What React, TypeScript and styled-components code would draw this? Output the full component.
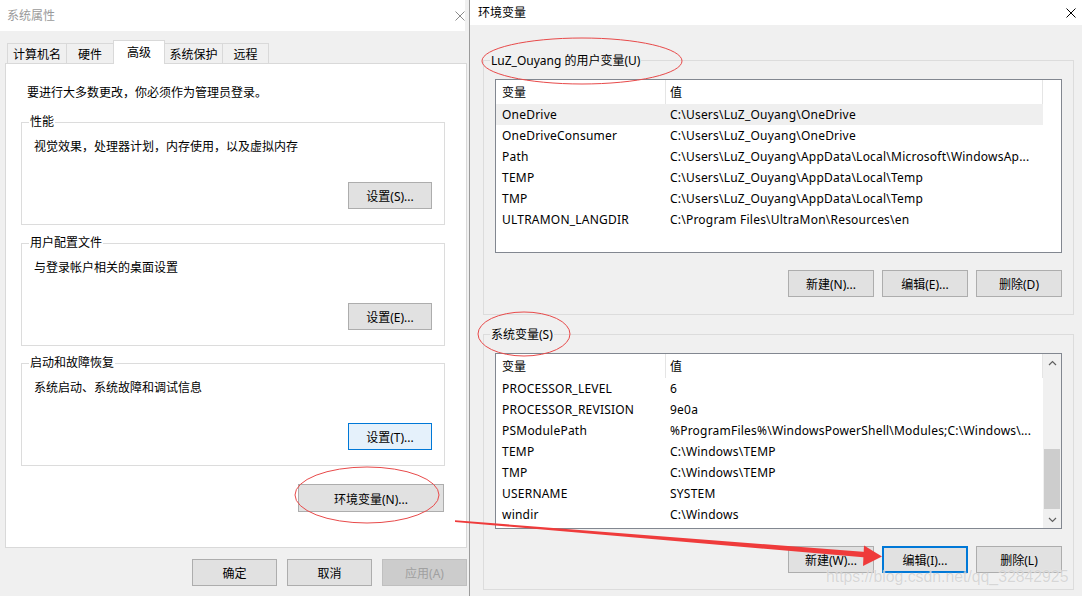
import React from 'react';
import styled, { createGlobalStyle } from 'styled-components';

const GlobalStyle = createGlobalStyle`
  html, body { margin: 0; padding: 0; background: #fff; }
  body {
    font-family: 'Noto Sans', 'Noto Sans CJK SC', sans-serif;
    font-size: 12px;
    color: #000;
  }
  * { box-sizing: border-box; }
`;

const Page = styled.div`
  position: relative;
  width: 1082px;
  height: 596px;
  display: flex;
  overflow: hidden;
`;

/* ---------- window chrome ---------- */

const LeftWindow = styled.div`
  width: 469px;
  display: flex;
  flex-direction: column;
  background: #f0f0f0;
`;

const RightWindow = styled.div`
  flex: 1;
  display: flex;
  flex-direction: column;
  background: #f0f0f0;
  border-left: 1px solid #9b9b9b;
`;

const TitleBar = styled.div<{ $h: number; $inactive?: boolean; $padL: number; $padR: number; $trim?: number }>`
  height: ${(p) => p.$h}px;
  background: #fff;
  display: flex;
  align-items: center;
  justify-content: space-between;
  padding: 0 ${(p) => p.$padR}px 0 ${(p) => p.$padL}px;
  margin-right: ${(p) => p.$trim || 0}px;
  color: ${(p) => (p.$inactive ? '#9a9a9a' : '#000')};
  line-height: 16px;
`;

const CloseIcon = ({ color }: { color: string }) => (
  <svg width="10" height="10" viewBox="0 0 10 10">
    <path d="M0.5 0.5 L9.5 9.5 M9.5 0.5 L0.5 9.5" stroke={color} strokeWidth="1" fill="none" />
  </svg>
);

/* ---------- buttons ---------- */

const Btn = styled.div<{ $w: number; $h?: number; $variant?: 'hover' | 'focus' | 'disabled' }>`
  width: ${(p) => p.$w}px;
  height: ${(p) => p.$h || 27}px;
  display: flex;
  align-items: center;
  justify-content: center;
  flex-shrink: 0;
  padding-top: 1px;
  background: ${(p) =>
    p.$variant === 'hover' ? '#e5f1fb' : p.$variant === 'disabled' ? '#cccccc' : '#e1e1e1'};
  border: ${(p) =>
    p.$variant === 'focus'
      ? '2px solid #0078d7'
      : p.$variant === 'hover'
      ? '1px solid #0078d7'
      : p.$variant === 'disabled'
      ? '1px solid #bfbfbf'
      : '1px solid #adadad'};
  color: ${(p) => (p.$variant === 'disabled' ? '#a0a0a0' : '#000')};
  white-space: nowrap;
`;

/* ---------- left dialog ---------- */

const LeftBody = styled.div`
  flex: 1;
  padding: 9px 2px 0 5px;
  display: flex;
  flex-direction: column;
`;

const TabStrip = styled.div`
  height: 23px;
  display: flex;
  align-items: flex-end;
  padding-left: 2px;
`;

const Tab = styled.div<{ $w: number; $active?: boolean }>`
  width: ${(p) => p.$w}px;
  height: ${(p) => (p.$active ? 24 : 20)}px;
  margin-left: -1px;
  margin-bottom: ${(p) => (p.$active ? -1 : 0)}px;
  position: relative;
  z-index: ${(p) => (p.$active ? 1 : 0)};
  display: flex;
  align-items: center;
  justify-content: center;
  padding-bottom: ${(p) => (p.$active ? 2 : 0)}px;
  background: ${(p) => (p.$active ? '#fff' : '#f0f0f0')};
  border: 1px solid #d9d9d9;
  border-bottom: none;
  &:first-child { margin-left: 0; }
`;

const TabPanel = styled.div`
  height: 485px;
  background: #fff;
  border: 1px solid #d9d9d9;
  padding: 21px 0 0 15px;
  display: flex;
  flex-direction: column;
`;

const Notice = styled.div`
  line-height: 16px;
  padding-left: 6px;
`;

const Group = styled.div<{ $top: number }>`
  width: 424px;
  height: 103px;
  margin-top: ${(p) => p.$top}px;
  border: 1px solid #dcdcdc;
  display: flex;
  flex-direction: column;
`;

const Legend = styled.div<{ $bg: string; $left: number }>`
  align-self: flex-start;
  margin: -9px 0 0 ${(p) => p.$left}px;
  padding: 0 1px;
  line-height: 16px;
  background: ${(p) => p.$bg};
`;

const GroupText = styled.div`
  margin-top: 9px;
  padding-left: 12px;
  line-height: 16px;
`;

const GroupAction = styled.div`
  margin: auto 12px 15px 0;
  align-self: flex-end;
`;

const EnvAction = styled.div`
  margin: 18px 22px 0 0;
  align-self: flex-end;
`;

const Footer = styled.div`
  margin-top: 11px;
  display: flex;
  justify-content: flex-end;
  gap: 10px;
`;

/* ---------- right dialog ---------- */

const RightBody = styled.div`
  flex: 1;
  padding: 35px 8px 0 13px;
  display: flex;
  flex-direction: column;
`;

const VarGroup = styled.div<{ $h: number; $top: number }>`
  height: ${(p) => p.$h}px;
  margin-top: ${(p) => p.$top}px;
  border: 1px solid #dcdcdc;
  display: flex;
  flex-direction: column;
`;

const VarLegend = styled(Legend)`
  margin-top: -8px;
`;

const ListBox = styled.div<{ $h: number }>`
  width: 567px;
  height: ${(p) => p.$h}px;
  margin: 10px 0 0 11px;
  border: 1px solid #828790;
  background: #fff;
  display: flex;
  overflow: hidden;
`;

const ListMain = styled.div`
  width: 547px;
  display: flex;
  flex-direction: column;
`;

const HeaderRow = styled.div`
  height: 24px;
  display: flex;
  border-right: 1px solid #e5e5e5;
`;

const HeaderCell = styled.div<{ $w?: number }>`
  ${(p) => (p.$w ? `width: ${p.$w}px; border-right: 1px solid #e5e5e5; padding-left: 6px;` : 'flex: 1; padding-left: 4px;')}
  line-height: 24px;
  padding-top: 1px;
`;

const Row = styled.div<{ $selected?: boolean }>`
  height: 21px;
  display: flex;
  align-items: center;
  letter-spacing: 0.22px;
  background: ${(p) => (p.$selected ? '#efefef' : 'transparent')};
`;

const NameCell = styled.div`
  width: 170px;
  padding-left: 6px;
  white-space: nowrap;
  overflow: hidden;
`;

const ValueCell = styled.div`
  flex: 1;
  padding-left: 4px;
  white-space: nowrap;
  overflow: hidden;
`;

const Scrollbar = styled.div`
  width: 18px;
  background: #f0f0f0;
  display: flex;
  flex-direction: column;
  margin-left: auto;
`;

const ScrollArrow = styled.div`
  height: 17px;
  display: flex;
  align-items: center;
  justify-content: center;
`;

const Track = styled.div`
  flex: 1;
  padding: 0 1px;
`;

const Thumb = styled.div`
  margin-top: 78px;
  height: 60px;
  background: #cdcdcd;
`;

const ButtonRow = styled.div<{ $top: number }>`
  margin-top: ${(p) => p.$top}px;
  display: flex;
  justify-content: flex-end;
  gap: 8px;
  padding-right: 11px;
`;

/* ---------- overlay marks ---------- */

const Marks = styled.svg`
  position: absolute;
  left: 0;
  top: 0;
  pointer-events: none;
`;

const Watermark = styled.div`
  position: absolute;
  left: 826px;
  top: 568px;
  font-family: 'Liberation Sans', Arial, sans-serif;
  font-size: 15.8px;
  color: rgba(190, 190, 190, 0.6);
  text-shadow: 0 0 1px rgba(255, 255, 255, 0.9);
  pointer-events: none;
  white-space: nowrap;
`;

const Chevron = ({ up }: { up?: boolean }) => (
  <svg width="9" height="6" viewBox="0 0 9 6">
    <path d={up ? 'M1 5 L4.5 1.5 L8 5' : 'M1 1 L4.5 4.5 L8 1'} stroke="#606060" strokeWidth="1.2" fill="none" />
  </svg>
);

const tabs = [
  { label: '计算机名', w: 60 },
  { label: '硬件', w: 48 },
  { label: '高级', w: 52, active: true },
  { label: '系统保护', w: 59 },
  { label: '远程', w: 47 },
];

const groups = [
  { title: '性能', text: '视觉效果，处理器计划，内存使用，以及虚拟内存', btn: '设置(S)...', top: 21 },
  { title: '用户配置文件', text: '与登录帐户相关的桌面设置', btn: '设置(E)...', top: 18 },
  { title: '启动和故障恢复', text: '系统启动、系统故障和调试信息', btn: '设置(T)...', top: 17, hover: true },
];

const userVars = [
  ['OneDrive', 'C:\\Users\\LuZ_Ouyang\\OneDrive'],
  ['OneDriveConsumer', 'C:\\Users\\LuZ_Ouyang\\OneDrive'],
  ['Path', 'C:\\Users\\LuZ_Ouyang\\AppData\\Local\\Microsoft\\WindowsAp...'],
  ['TEMP', 'C:\\Users\\LuZ_Ouyang\\AppData\\Local\\Temp'],
  ['TMP', 'C:\\Users\\LuZ_Ouyang\\AppData\\Local\\Temp'],
  ['ULTRAMON_LANGDIR', 'C:\\Program Files\\UltraMon\\Resources\\en'],
];

const sysVars = [
  ['PROCESSOR_LEVEL', '6'],
  ['PROCESSOR_REVISION', '9e0a'],
  ['PSModulePath', '%ProgramFiles%\\WindowsPowerShell\\Modules;C:\\Windows\\...'],
  ['TEMP', 'C:\\Windows\\TEMP'],
  ['TMP', 'C:\\Windows\\TEMP'],
  ['USERNAME', 'SYSTEM'],
  ['windir', 'C:\\Windows'],
];

const VarList = ({ rows, height, scroll, selected }: { rows: string[][]; height: number; scroll?: boolean; selected?: number }) => (
  <ListBox $h={height}>
    <ListMain>
      <HeaderRow>
        <HeaderCell $w={170}>变量</HeaderCell>
        <HeaderCell>值</HeaderCell>
      </HeaderRow>
      {rows.map(([name, value], i) => (
        <Row key={name + i} $selected={i === selected}>
          <NameCell>{name}</NameCell>
          <ValueCell>{value}</ValueCell>
        </Row>
      ))}
    </ListMain>
    {scroll && (
      <Scrollbar>
        <ScrollArrow><Chevron up /></ScrollArrow>
        <Track><Thumb /></Track>
        <ScrollArrow><Chevron /></ScrollArrow>
      </Scrollbar>
    )}
  </ListBox>
);

export default function App() {
  return (
    <>
      <GlobalStyle />
      <Page>
        <LeftWindow>
          <TitleBar $h={31} $inactive $padL={7} $padR={0} $trim={4}>
            <span>系统属性</span>
            <CloseIcon color="#8a8a8a" />
          </TitleBar>
          <LeftBody>
            <TabStrip>
              {tabs.map((t) => (
                <Tab key={t.label} $w={t.w} $active={t.active}>{t.label}</Tab>
              ))}
            </TabStrip>
            <TabPanel>
              <Notice>要进行大多数更改，你必须作为管理员登录。</Notice>
              {groups.map((g) => (
                <Group key={g.title} $top={g.top}>
                  <Legend $bg="#fff" $left={7}>{g.title}</Legend>
                  <GroupText>{g.text}</GroupText>
                  <GroupAction>
                    <Btn $w={84} $variant={g.hover ? 'hover' : undefined}>{g.btn}</Btn>
                  </GroupAction>
                </Group>
              ))}
              <EnvAction>
                <Btn $w={146} $h={28}>环境变量(N)...</Btn>
              </EnvAction>
            </TabPanel>
            <Footer>
              <Btn $w={85}>确定</Btn>
              <Btn $w={85}>取消</Btn>
              <Btn $w={85} $variant="disabled">应用(A)</Btn>
            </Footer>
          </LeftBody>
        </LeftWindow>

        <RightWindow>
          <TitleBar $h={25} $padL={8} $padR={6}>
            <span>环境变量</span>
            <CloseIcon color="#000" />
          </TitleBar>
          <RightBody>
            <VarGroup $h={255} $top={0}>
              <VarLegend $bg="#f0f0f0" $left={6}>LuZ_Ouyang 的用户变量(U)</VarLegend>
              <VarList rows={userVars} height={174} selected={0} />
              <ButtonRow $top={17}>
                <Btn $w={86}>新建(N)...</Btn>
                <Btn $w={86}>编辑(E)...</Btn>
                <Btn $w={86}>删除(D)</Btn>
              </ButtonRow>
            </VarGroup>
            <VarGroup $h={256} $top={19}>
              <VarLegend $bg="#f0f0f0" $left={6}>系统变量(S)</VarLegend>
              <VarList rows={sysVars} height={176} scroll />
              <ButtonRow $top={17}>
                <Btn $w={86}>新建(W)...</Btn>
                <Btn $w={86} $variant="focus">编辑(I)...</Btn>
                <Btn $w={86}>删除(L)</Btn>
              </ButtonRow>
            </VarGroup>
          </RightBody>
        </RightWindow>

        <Marks width="1082" height="596" viewBox="0 0 1082 596">
          <ellipse cx="582" cy="61" rx="100" ry="23" fill="none" stroke="#e84a4a" strokeWidth="1" />
          <ellipse cx="524" cy="334" rx="46" ry="22" fill="none" stroke="#e84a4a" strokeWidth="1" />
          <ellipse cx="367" cy="495" rx="72" ry="28" fill="none" stroke="#e84a4a" strokeWidth="1" />
          <polygon points="455,520.3 866,552 866,557.5 455,522" fill="#ef3b3b" />
          <polygon points="864,545.5 882,556.5 863,566" fill="#ef3b3b" />
        </Marks>
        <Watermark>https://blog.csdn.net/qq_32842925</Watermark>
      </Page>
    </>
  );
}
